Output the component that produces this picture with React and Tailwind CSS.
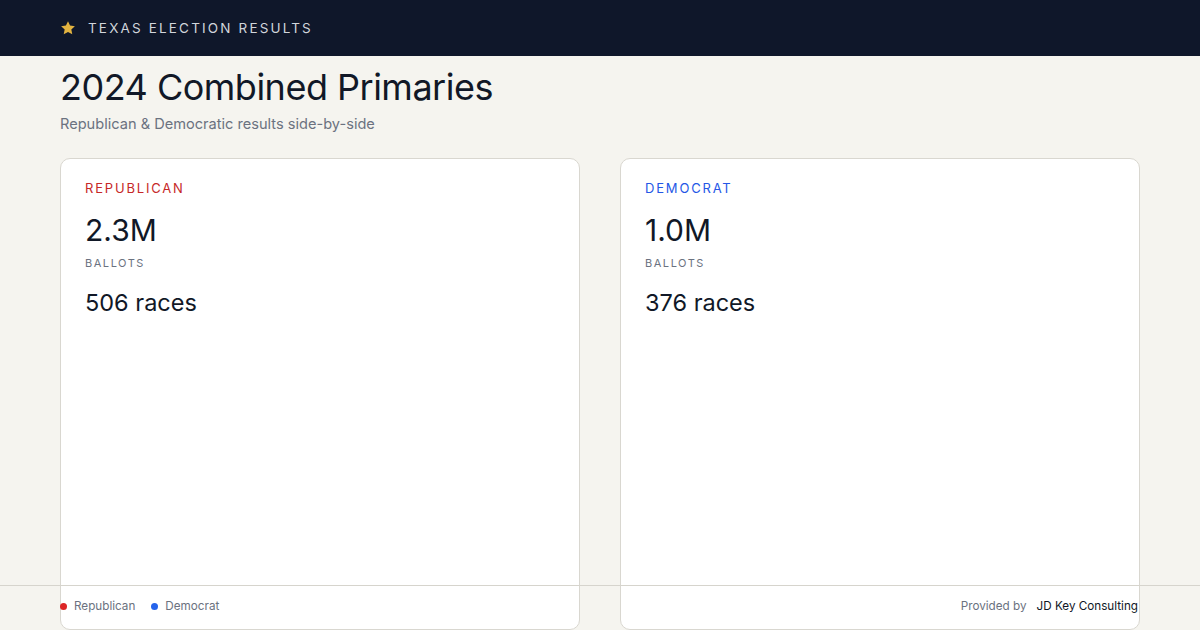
export default function App() {
  const parties = [
    { name: "REPUBLICAN", color: "text-[#c62828]", ballots: "2.3M", races: "506 races" },
    { name: "DEMOCRAT", color: "text-[#2457e6]", ballots: "1.0M", races: "376 races" },
  ];
  return (
    <div className="relative h-[630px] w-[1200px] overflow-hidden bg-[#f5f4ef] font-['Inter','Noto_Sans',sans-serif] text-[#111827]">
      <header className="flex h-14 items-center gap-3 bg-[#0f172a] px-[60px]">
        <svg width="16" height="16" viewBox="0 0 24 24" className="fill-[#e2b340]">
          <path d="M12 1.8l3.1 6.6 7.2.9-5.3 5 1.4 7.1L12 17.9l-6.4 3.5L7 14.3l-5.3-5 7.2-.9z" />
        </svg>
        <span className="text-[13.5px] tracking-[0.16em] text-[#d1d5db]">TEXAS ELECTION RESULTS</span>
      </header>

      <main className="px-[60px]">
        <h1 className="mt-[9px] text-[36px] leading-[44px] tracking-[-0.5px] text-[#111827]">2024 Combined Primaries</h1>
        <p className="mt-[5px] text-[14.6px] leading-5 text-[#6b7280]">Republican &amp; Democratic results side-by-side</p>

        <div className="mt-[24px] grid grid-cols-2 gap-10">
          {parties.map((p) => (
            <div key={p.name} className="h-[472px] rounded-[10px] border border-[#d9d7d0] bg-white px-6 pt-[19px]">
              <div className={`text-[13px] tracking-[0.14em] leading-5 ${p.color}`}>{p.name}</div>
              <div className="mt-[14px] text-[30px] leading-9">{p.ballots}</div>
              <div className="mt-[7px] text-[11px] tracking-[0.14em] leading-4 text-[#6b7280]">BALLOTS</div>
              <div className="mt-[18px] text-[23.5px] leading-7">{p.races}</div>
            </div>
          ))}
        </div>
      </main>

      <footer className="absolute bottom-0 left-0 right-0 flex h-[45px] items-center justify-between border-t border-[#d6d4cd] px-[60px] pb-[2px] text-[11.7px]">
        <div className="flex items-center gap-[16px]">
          <span className="flex items-center gap-[7px] text-[#6b7280]">
            <span className="h-[7px] w-[7px] rounded-full bg-[#dc2626]" />
            Republican
          </span>
          <span className="flex items-center gap-[7px] text-[#6b7280]">
            <span className="h-[7px] w-[7px] rounded-full bg-[#2563eb]" />
            Democrat
          </span>
        </div>
        <div className="flex items-center gap-[10px] pr-[2px]">
          <span className="text-[#6b7280]">Provided by</span>
          <span className="text-[#111827]">JD Key Consulting</span>
        </div>
      </footer>
    </div>
  );
}
